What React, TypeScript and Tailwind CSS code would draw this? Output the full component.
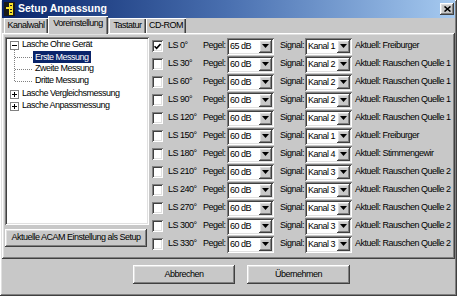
import React from "react";

const raised =
  "shadow-[inset_-1px_-1px_#404040,inset_1px_1px_#ffffff,inset_-2px_-2px_#808080,inset_2px_2px_#e0e0e0]";
const sunken =
  "shadow-[inset_1px_1px_#808080,inset_-1px_-1px_#ffffff,inset_2px_2px_#404040,inset_-2px_-2px_#e0e0e0]";

interface Row {
  ls: string;
  checked?: boolean;
  pegel: string;
  kanal: string;
  aktuell: string;
}

const rows: Row[] = [
  { ls: "0°", checked: true, pegel: "65 dB", kanal: "Kanal 1", aktuell: "Freiburger" },
  { ls: "30°", pegel: "60 dB", kanal: "Kanal 2", aktuell: "Rauschen Quelle 1" },
  { ls: "60°", pegel: "60 dB", kanal: "Kanal 2", aktuell: "Rauschen Quelle 1" },
  { ls: "90°", pegel: "60 dB", kanal: "Kanal 2", aktuell: "Rauschen Quelle 1" },
  { ls: "120°", pegel: "60 dB", kanal: "Kanal 2", aktuell: "Rauschen Quelle 1" },
  { ls: "150°", pegel: "60 dB", kanal: "Kanal 1", aktuell: "Freiburger" },
  { ls: "180°", pegel: "60 dB", kanal: "Kanal 4", aktuell: "Stimmengewir" },
  { ls: "210°", pegel: "60 dB", kanal: "Kanal 3", aktuell: "Rauschen Quelle 2" },
  { ls: "240°", pegel: "60 dB", kanal: "Kanal 3", aktuell: "Rauschen Quelle 2" },
  { ls: "270°", pegel: "60 dB", kanal: "Kanal 3", aktuell: "Rauschen Quelle 2" },
  { ls: "300°", pegel: "60 dB", kanal: "Kanal 3", aktuell: "Rauschen Quelle 2" },
  { ls: "330°", pegel: "60 dB", kanal: "Kanal 3", aktuell: "Rauschen Quelle 2" },
];

const Combo = ({ value, width }: { value: string; width: string }) => (
  <div className={`${width} shrink-0 h-[17px] bg-white ${sunken} flex items-center p-[2px]`}>
    <span className="flex-1 pl-px text-black leading-none whitespace-nowrap overflow-hidden">{value}</span>
    <div className={`w-[13px] h-[13px] shrink-0 bg-[#c8c8c8] ${raised} flex items-center justify-center`}>
      <svg width="7" height="4" viewBox="0 0 7 4">
        <path d="M0 0h7L3.5 4z" fill="#000" />
      </svg>
    </div>
  </div>
);

const Checkbox = ({ checked }: { checked?: boolean }) => (
  <div className={`w-[11px] h-[12px] shrink-0 bg-white ${sunken} flex items-center justify-center`}>
    {checked && (
      <svg width="7" height="7" viewBox="0 0 7 7">
        <path d="M0.5 3.2L2.6 5.3L6.5 1" stroke="#000" strokeWidth="1.6" fill="none" />
      </svg>
    )}
  </div>
);

const Expander = ({ open }: { open?: boolean }) => (
  <div className="w-[9px] h-[9px] shrink-0 border border-[#808080] bg-white flex items-center justify-center relative">
    <div className="absolute w-[5px] h-px bg-black" />
    {!open && <div className="absolute w-px h-[5px] bg-black" />}
  </div>
);

const Tree = () => (
  <div className={`relative w-[144px] h-[188px] bg-white ${sunken} pt-[2px] text-black`}>
    <svg className="absolute left-0 top-0" width="144" height="80">
      <g stroke="#808080" strokeDasharray="1 1" strokeWidth="1">
        <line x1="9.5" y1="13" x2="9.5" y2="45" />
        <line x1="10" y1="20.5" x2="27" y2="20.5" />
        <line x1="10" y1="32.5" x2="27" y2="32.5" />
        <line x1="10" y1="44.5" x2="27" y2="44.5" />
      </g>
    </svg>
    <div className="relative flex items-center h-[12px] pl-[5px] gap-[3px]">
      <Expander open />
      <span>Lasche Ohne Gerät</span>
    </div>
    <div className="relative flex items-center h-[12px] pl-[28px]">
      <span className="bg-[#0a246a] text-white px-[2px] h-[12px] leading-[12px]">Erste Messung</span>
    </div>
    <div className="relative flex items-center h-[12px] pl-[30px]">Zweite Messung</div>
    <div className="relative flex items-center h-[12px] pl-[30px]">Dritte Messung</div>
    <div className="relative flex items-center h-[12px] mt-px pl-[5px] gap-[3px]">
      <Expander />
      <span>Lasche Vergleichsmessung</span>
    </div>
    <div className="relative flex items-center h-[12px] pl-[5px] gap-[3px]">
      <Expander />
      <span>Lasche Anpassmessung</span>
    </div>
  </div>
);

const Button = ({ label, width }: { label: string; width: string }) => (
  <div className={`${width} h-[19px] bg-[#c8c8c8] ${raised} flex items-center justify-center text-black whitespace-nowrap`}>
    {label}
  </div>
);

const tabBase =
  "h-[15px] shrink-0 bg-[#c8c8c8] flex items-center justify-center text-black whitespace-nowrap shadow-[inset_1px_1px_#ffffff,inset_-1px_0_#404040,inset_-2px_0_#808080]";

export default function App() {
  return (
    <div
      className={`w-[457px] h-[296px] bg-[#c8c8c8] ${raised} flex flex-col px-[2px] text-[9px] tracking-[-0.5px] overflow-hidden`}
      style={{ fontFamily: '"Liberation Sans", Arial, sans-serif' }}
    >
      {/* title bar */}
      <div className="h-[18px] shrink-0 bg-linear-to-r from-[#0a246a] via-[#4a70b0] to-[#a6caf0] flex items-center pl-[2px] pr-[1px] tracking-normal">
        <svg width="11" height="14" viewBox="0 0 11 14" className="mr-[3px]">
          <rect x="0" y="0" width="11" height="14" fill="#1a1a1a" />
          <path d="M5 1h4v12H5z" fill="#f5e12a" />
          <path d="M2 5h3v2H2z" fill="#f5e12a" />
          <path d="M6 3h2v1H6zM6 7h2v1H6zM6 10h2v1H6z" fill="#222" />
        </svg>
        <span className="text-white font-bold text-[10.5px] flex-1">Setup Anpassung</span>
        <div className={`w-[14px] h-[12px] bg-[#c8c8c8] ${raised} flex items-center justify-center`}>
          <svg width="7" height="6" viewBox="0 0 7 6">
            <path d="M0.5 0.5L6.5 5.5M6.5 0.5L0.5 5.5" stroke="#000" strokeWidth="1.6" />
          </svg>
        </div>
      </div>

      {/* tabs */}
      <div className="h-[15px] shrink-0 flex items-end pl-[2px] relative z-10">
        <div className={`${tabBase} w-[44px]`}>Kanalwahl</div>
        <div className={`${tabBase} w-[60px] h-[18px] -mb-px pb-[2px]`}>Voreinstellung</div>
        <div className={`${tabBase} w-[37px] ml-px`}>Tastatur</div>
        <div className={`${tabBase} w-[40px]`}>CD-ROM</div>
      </div>

      {/* tab panel */}
      <div className={`h-[226px] shrink-0 flex gap-[3px] pl-[3px] pt-[4px] ${raised}`}>
        <div className="flex flex-col gap-[4px] shrink-0">
          <Tree />
          <div className={`w-[142px] h-[18px] bg-[#c8c8c8] ${raised} flex items-center justify-center text-black whitespace-nowrap`}>
            Aktuelle ACAM Einstellung als Setup
          </div>
        </div>
        <div className="flex flex-col">
          {rows.map((r) => (
            <div key={r.ls} className="h-[18px] flex items-center text-black whitespace-nowrap">
              <Checkbox checked={r.checked} />
              <span className="w-[40px] shrink-0 pl-[5px]">LS {r.ls}</span>
              <span className="w-[24px] shrink-0">Pegel:</span>
              <Combo value={r.pegel} width="w-[47px]" />
              <span className="w-[31px] shrink-0 pl-[6px]">Signal:</span>
              <Combo value={r.kanal} width="w-[47px]" />
              <span className="pl-[3px]">Aktuell: {r.aktuell}</span>
            </div>
          ))}
        </div>
      </div>

      {/* bottom buttons */}
      <div className="flex gap-[12px] pl-[131px] pt-[6px]">
        <Button label="Abbrechen" width="w-[102px]" />
        <Button label="Übernehmen" width="w-[103px]" />
      </div>
    </div>
  );
}
